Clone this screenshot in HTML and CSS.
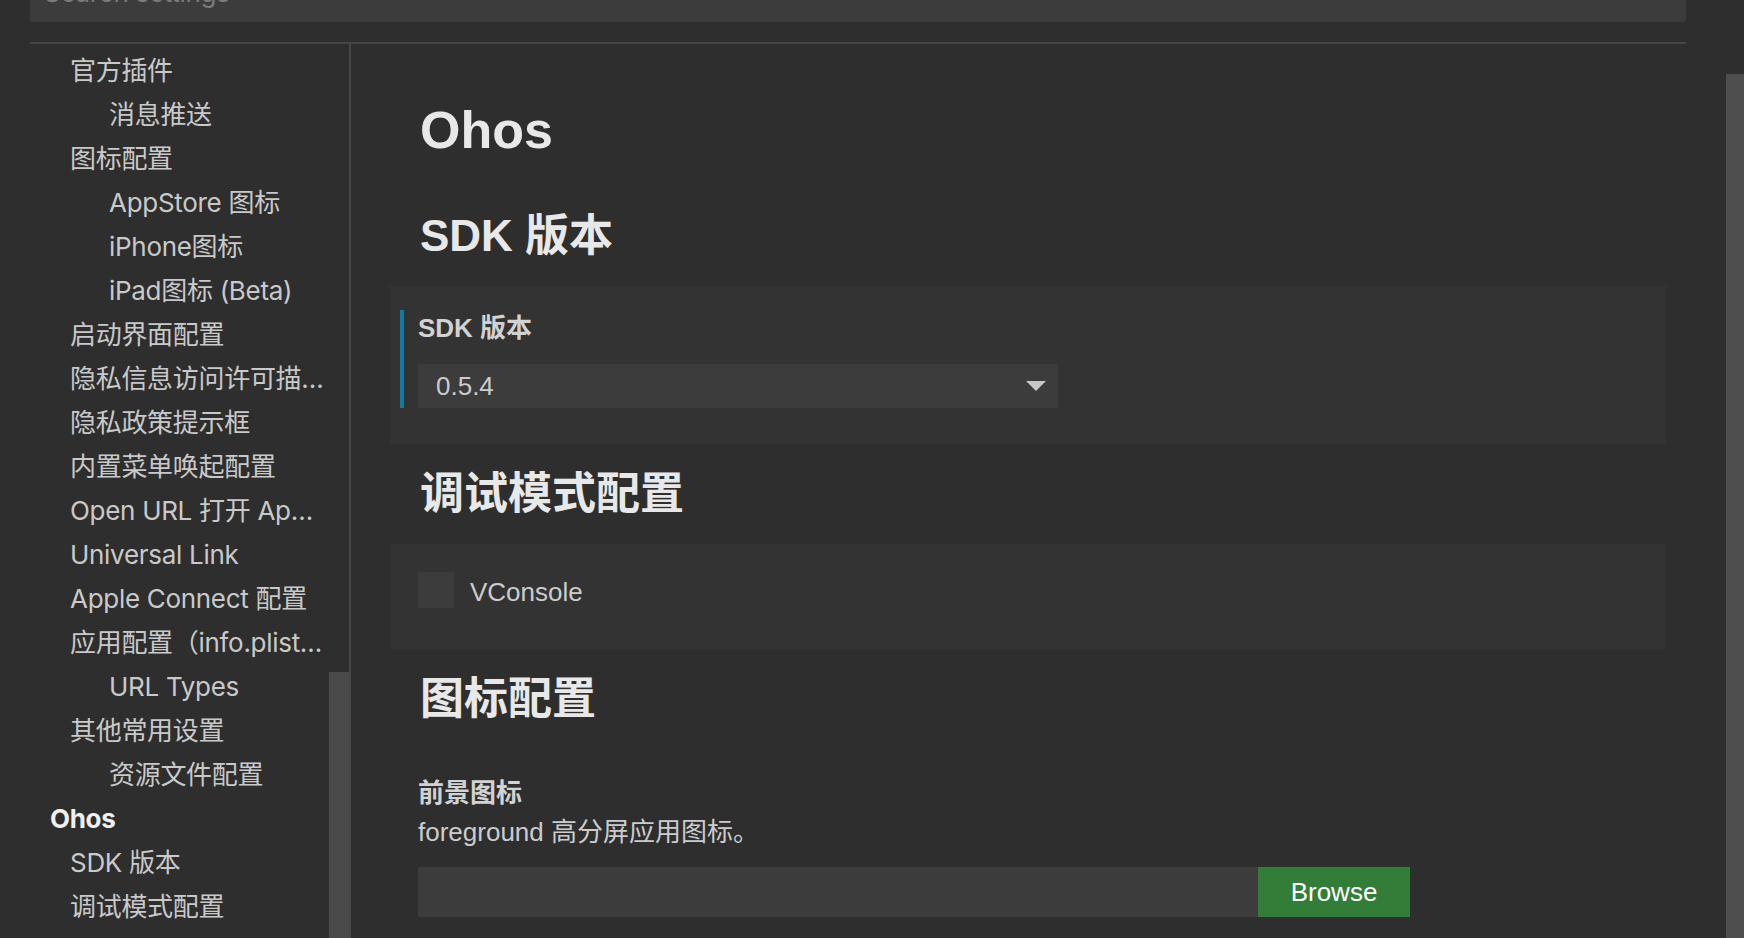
FILE: index.html
```html
<!DOCTYPE html>
<html lang="zh-CN">
<head>
<meta charset="utf-8">
<title>Settings</title>
<link rel="stylesheet" href="styles.css">
</head>
<body>
<div class="page">
  <div class="search"><span class="placeholder">Search settings</span></div>
  <div class="layout">
    <nav class="toc">
      <div class="toc-item l1">官方插件</div>
      <div class="toc-item l2">消息推送</div>
      <div class="toc-item l1">图标配置</div>
      <div class="toc-item l2">AppStore 图标</div>
      <div class="toc-item l2">iPhone图标</div>
      <div class="toc-item l2">iPad图标 (Beta)</div>
      <div class="toc-item l1">启动界面配置</div>
      <div class="toc-item l1">隐私信息访问许可描述</div>
      <div class="toc-item l1">隐私政策提示框</div>
      <div class="toc-item l1">内置菜单唤起配置</div>
      <div class="toc-item l1">Open URL 打开 App 配置</div>
      <div class="toc-item l1">Universal Link</div>
      <div class="toc-item l1">Apple Connect 配置</div>
      <div class="toc-item l1">应用配置（info.plist 文件）</div>
      <div class="toc-item l2">URL Types</div>
      <div class="toc-item l1">其他常用设置</div>
      <div class="toc-item l2">资源文件配置</div>
      <div class="toc-item l0">Ohos</div>
      <div class="toc-item l1">SDK 版本</div>
      <div class="toc-item l1">调试模式配置</div>
      <div class="toc-thumb"></div>
    </nav>
    <main class="content">
      <h1 class="group-title">Ohos</h1>

      <h2 class="section-title">SDK 版本</h2>
      <div class="setting card focused">
        <div class="setting-inner">
          <div class="setting-label">SDK 版本</div>
          <div class="select">
            <span class="select-value">0.5.4</span>
            <svg class="select-arrow" width="20" height="10" viewBox="0 0 20 10"><polygon points="0,0 20,0 10,10" fill="#c8c8c8"/></svg>
          </div>
        </div>
      </div>

      <h2 class="section-title">调试模式配置</h2>
      <div class="setting card check-card">
        <div class="setting-inner">
          <div class="checkbox-row">
            <span class="checkbox"></span>
            <span class="checkbox-label">VConsole</span>
          </div>
        </div>
      </div>

      <h2 class="section-title">图标配置</h2>
      <div class="setting plain">
        <div class="setting-inner">
          <div class="setting-label">前景图标</div>
          <div class="setting-desc">foreground 高分屏应用图标。</div>
          <div class="file-row">
            <div class="file-input"></div>
            <button class="browse">Browse</button>
          </div>
        </div>
      </div>
    </main>
  </div>
  <div class="page-scrollbar"></div>
</div>
</body>
</html>
```

FILE: styles.css
```css
html, body {
  margin: 0;
  padding: 0;
}

body {
  background: #2e2e2e;
  overflow: hidden;
  font-family: "Liberation Sans", "Noto Sans CJK SC", sans-serif;
}

.page {
  position: relative;
  height: 938px;
  box-sizing: border-box;
  padding: 0 58px 0 30px;
  display: flex;
  flex-direction: column;
  overflow: hidden;
}

.search {
  flex: none;
  height: 52px;
  margin-top: -30px;
  background: #3c3c3c;
  border-radius: 3px;
  padding-left: 14px;
  font-family: Inter, "Noto Sans CJK SC", sans-serif;
  font-size: 26px;
  line-height: 46px;
  letter-spacing: -0.3px;
  color: #7b7b7b;
  overflow: hidden;
}

.layout {
  flex: 1;
  min-height: 0;
  margin-top: 20px;
  border-top: 2px solid #464646;
  display: flex;
}

.toc {
  position: relative;
  flex: none;
  width: 321px;
  box-sizing: border-box;
  border-right: 2px solid #464646;
  padding-top: 5px;
  overflow: hidden;
  font-family: Inter, "Noto Sans CJK SC", sans-serif;
  font-size: 26px;
  letter-spacing: -0.3px;
  color: #c9c9c9;
}

.toc-item {
  height: 44px;
  line-height: 44px;
  white-space: nowrap;
  overflow: hidden;
  text-overflow: ellipsis;
  padding-right: 23px;
}

.l0 {
  padding-left: 20px;
  font-weight: 700;
  color: #f0f0f0;
}

.l1 {
  padding-left: 40px;
}

.l2 {
  padding-left: 79px;
}

.toc-thumb {
  position: absolute;
  right: 0;
  top: 628px;
  bottom: 0;
  width: 20px;
  background: #4a4a4a;
}

.content {
  flex: 1;
  min-width: 0;
  padding: 55px 20px 0 39px;
  color: #cccccc;
}

.group-title {
  margin: 0 0 49px;
  padding-left: 30px;
  font-size: 52px;
  line-height: 62px;
  font-weight: 700;
  color: #e8e8e8;
}

.section-title {
  margin: 24px 0;
  padding-left: 30px;
  font-size: 44px;
  line-height: 52px;
  font-weight: 700;
  color: #e8e8e8;
}

.setting {
  padding: 24px 0 36px 10px;
}

.card {
  background: #333333;
}

.check-card {
  padding: 28px 0 33px 10px;
}

.plain {
  padding: 26px 0 0 10px;
}

.setting-inner {
  border-left: 4px solid transparent;
  padding-left: 14px;
}

.focused .setting-inner {
  border-left-color: #0f7ba0;
}

.setting-label {
  font-size: 26px;
  line-height: 36px;
  font-weight: 700;
  color: #d2d2d2;
}

.select {
  margin-top: 18px;
  width: 640px;
  height: 44px;
  box-sizing: border-box;
  background: #3c3c3c;
  padding: 0 12px 0 18px;
  display: flex;
  align-items: center;
  justify-content: space-between;
  font-size: 26px;
  line-height: 44px;
  color: #cccccc;
}

.select-arrow {
  display: block;
}

.checkbox-row {
  display: flex;
  align-items: flex-start;
  gap: 16px;
  height: 44px;
}

.checkbox {
  flex: none;
  width: 36px;
  height: 36px;
  background: #3c3c3c;
}

.checkbox-label {
  font-size: 26px;
  line-height: 40px;
  color: #cccccc;
}

.setting-desc {
  margin-top: 3px;
  font-size: 26px;
  line-height: 36px;
  color: #cccccc;
}

.file-row {
  margin-top: 17px;
  display: flex;
  height: 50px;
}

.file-input {
  width: 840px;
  background: #3c3c3c;
}

.browse {
  width: 152px;
  border: 0;
  padding: 0;
  background: #327d38;
  color: #ffffff;
  font-family: "Liberation Sans", sans-serif;
  font-size: 26px;
}

.page-scrollbar {
  position: absolute;
  right: 0;
  top: 74px;
  bottom: 0;
  width: 18px;
  background: #4e4e4e;
}
```
